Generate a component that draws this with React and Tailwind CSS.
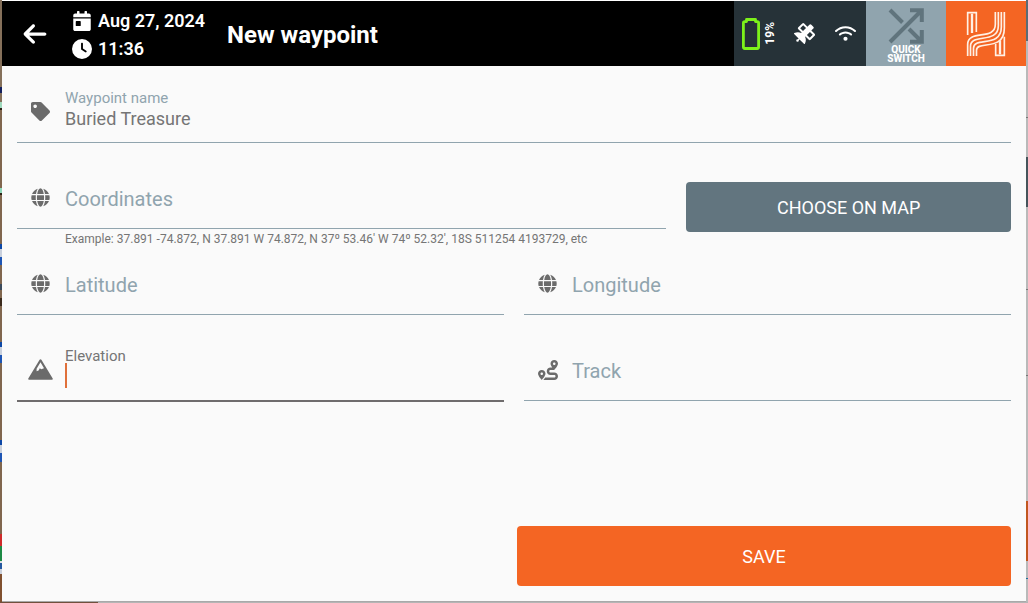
import { FaArrowLeft, FaClock, FaWifi } from "react-icons/fa6";
import { FaCalendarDay, FaGlobe, FaRoute, FaSatellite, FaTag } from "react-icons/fa";

const leftSlices = [
  "h-[87px] bg-[#85705a]",
  "h-[6px] bg-[#14205c]",
  "h-[9px] bg-[#85705a]",
  "h-[6px] bg-[#9fd9bd]",
  "h-[2px] bg-[#2c2015]",
  "h-[78px] bg-[#80664e]",
  "h-[5px] bg-[#8fd8bb]",
  "h-[2px] bg-[#2c2015]",
  "h-[49px] bg-[#80664e]",
  "h-[5px] bg-[#0d47a6]",
  "h-[8px] bg-[#c9d0dc]",
  "h-[8px] bg-[#1d55b4]",
  "h-[19px] bg-[#80664e]",
  "h-[6px] bg-[#3c4a5c]",
  "h-[8px] bg-[#80664e]",
  "h-[8px] bg-[#3a2a1c]",
  "h-[36px] bg-[#80664e]",
  "h-[5px] bg-[#0d47a6]",
  "h-[8px] bg-[#c9d0dc]",
  "h-[8px] bg-[#1d55b4]",
  "h-[77px] bg-[#80664e]",
  "h-[5px] bg-[#0d47a6]",
  "h-[8px] bg-[#c9d0dc]",
  "h-[9px] bg-[#1d55b4]",
  "h-[72px] bg-[#80664e]",
  "h-[12px] bg-[#cf2a2a]",
  "h-[15px] bg-[#1d8a45]",
  "h-[2px] bg-[#e0e0e0]",
  "h-[6px] bg-[#2458a0]",
  "h-[5px] bg-[#c9d0dc]",
  "grow bg-[#80502f]",
];

const rightSlices = [
  "h-[41px] bg-[#5a6b73]",
  "h-[76px] bg-[#b9b9b9]",
  "h-px bg-[#777777]",
  "h-[39px] bg-[#b9b9b9]",
  "h-[50px] bg-[#45545b]",
  "h-[82px] bg-[#b9b9b9]",
  "h-px bg-[#777777]",
  "h-[85px] bg-[#b9b9b9]",
  "h-px bg-[#777777]",
  "h-[125px] bg-[#b9b9b9]",
  "h-[60px] bg-[#c1561f]",
  "h-[17px] bg-[#b9b9b9]",
  "h-px bg-[#1f6f9f]",
  "grow bg-[#b9b9b9]",
];

function Strip({ slices }) {
  return (
    <div className="flex w-0.5 shrink-0 flex-col" aria-hidden="true">
      {slices.map((slice, i) => (
        <div key={i} className={slice} />
      ))}
    </div>
  );
}

function BatteryIcon() {
  return (
    <svg width="18" height="32" viewBox="0 0 18 32" fill="none" stroke="#7df21a" strokeWidth="2.8" strokeLinejoin="round" aria-hidden="true">
      <path d="M4.500 3.600V1.500h9v2.100h1.700q1.400 0 1.400 1.400v24.100q0 1.400-1.400 1.400H2.800q-1.400 0-1.400-1.400V5q0-1.400 1.400-1.400z" />
    </svg>
  );
}

function ShuffleIcon() {
  return (
    <svg width="36" height="36" viewBox="0 0 36 36" fill="none" stroke="#60747d" strokeWidth="4" aria-hidden="true">
      <path d="M2 34 33 3M2 2l12.500 12.500M21 21l12 12M22 2.200h11.800V14M22 33.800h11.800V22" />
    </svg>
  );
}

function BrandLogo() {
  return (
    <svg width="40" height="46" viewBox="0 0 120 138" fill="none" stroke="#fff0e4" strokeWidth="5" aria-hidden="true">
      <path d="M5 72V5h26v58" />
      <path d="M18 66V8" strokeWidth="7" />
      <path d="M115 77v56H89V99" />
      <path d="M102 88v42" strokeWidth="7" />
      <path d="M5 135V100C5 54 88 90 88 40V3" />
      <path d="M13.500 135V106C13.500 65 97 101 97 44V3" />
      <path d="M22.500 135V112C22.500 76 106 112 106 48V3" />
      <path d="M31.500 135V118C31.500 87 115 123 115 52V3" />
    </svg>
  );
}

function PeakIcon() {
  return (
    <svg width="25" height="21" viewBox="0 0 25 21" aria-hidden="true">
      <path
        fill="#6b6b6b"
        fillRule="evenodd"
        d="M12.500 0.300q.6 0 .9.500L24.700 19.400q.5 1.300-.8 1.300H1.100q-1.300 0-.8-1.300L11.600.8q.3-.5.9-.5zM12.500 3.200 8.600 9.700v2.500l2-.8 1.200-2.200 1.500 1 2.700-.9z"
      />
    </svg>
  );
}

function Field({ id, label, icon, value, floating, active }) {
  return (
    <div className={`flex ${active ? "h-[63px] border-b-2 border-[#6f6c6d]" : "h-[62px] border-b border-[#90a4ae]"}`}>
      <label htmlFor={id} className="flex w-12 shrink-0 items-center justify-center pr-px text-[#6b6b6b]">
        {icon}
      </label>
      {floating ? (
        <div className="relative flex min-w-0 grow flex-col pt-2">
          <label htmlFor={id} className={`text-[15px] leading-[18px] ${active ? "text-[#757575]" : "text-[#90a4ae]"}`}>
            {label}
          </label>
          <input
            id={id}
            defaultValue={value}
            className="h-6 w-full bg-transparent text-lg text-[#757575] outline-none"
          />
          {active && <span className="absolute top-6 left-0 h-[25px] w-0.5 bg-[#e0703a]" />}
        </div>
      ) : (
        <input
          id={id}
          aria-label={label}
          placeholder={label}
          className="min-w-0 grow bg-transparent pt-0.5 text-xl text-[#757575] outline-none placeholder:text-[#90a4ae]"
        />
      )}
    </div>
  );
}

export default function App() {
  return (
    <div className="flex min-h-screen flex-col bg-[#b5b5b5] font-[Roboto,sans-serif]">
      <div className="flex grow">
        <Strip slices={leftSlices} />
        <div className="flex min-w-0 grow flex-col border-t border-b border-t-white border-b-[#a9a9a9] bg-[#fafafa]">
          <header className="flex h-[65px] bg-black text-white">
            <button type="button" aria-label="Back" className="flex w-[66px] items-center justify-center">
              <FaArrowLeft size={26} />
            </button>
            <div className="flex flex-col justify-center gap-1 pt-0.5 pl-1 text-lg leading-6 font-semibold">
              <div className="flex items-center gap-1.5">
                <FaCalendarDay size={20} />
                <span>Aug 27, 2024</span>
              </div>
              <div className="flex items-center gap-1.5">
                <FaClock size={20} />
                <span>11:36</span>
              </div>
            </div>
            <h1 className="flex items-center pt-0.5 pl-[22px] text-2xl font-bold">New waypoint</h1>
            <div className="ml-auto flex w-[132px] items-center bg-[#263238] pl-2">
              <BatteryIcon />
              <span className="ml-0.5 rotate-180 text-xs leading-4 font-bold [writing-mode:vertical-rl]">19%</span>
              <FaSatellite size={21} className="ml-4" />
              <FaWifi size={21} className="ml-5" />
            </div>
            <button type="button" className="flex w-20 flex-col items-center bg-[#90a4ae] pt-[7px] text-[10px] leading-[9px] font-extrabold">
              <ShuffleIcon />
              <span className="pt-px">
                QUICK
                <br />
                SWITCH
              </span>
            </button>
            <button type="button" aria-label="Home" className="flex w-20 items-center justify-center bg-[#f46523]">
              <BrandLogo />
            </button>
          </header>
          <form className="flex grow flex-col p-[15px]">
            <Field id="name" label="Waypoint name" value="Buried Treasure" floating icon={<FaTag size={19} />} />
            <div className="mt-6 grid grid-cols-[2fr_1fr] gap-5">
              <div>
                <Field id="coordinates" label="Coordinates" icon={<FaGlobe size={19} />} />
                <p className="h-6 pt-0.5 pl-12 text-xs text-[#757575]">
                  Example: 37.891 -74.872, N 37.891 W 74.872, N 37º 53.46' W 74º 52.32', 18S 511254 4193729, etc
                </p>
              </div>
              <button type="button" className="mt-[15px] h-[50px] rounded bg-[#62757f] pt-0.5 text-lg text-white">
                CHOOSE ON MAP
              </button>
            </div>
            <div className="grid grid-cols-2 gap-x-5 gap-y-6">
              <Field id="latitude" label="Latitude" icon={<FaGlobe size={19} />} />
              <Field id="longitude" label="Longitude" icon={<FaGlobe size={19} />} />
              <Field id="elevation" label="Elevation" floating active icon={<PeakIcon />} />
              <Field id="track" label="Track" icon={<FaRoute size={20} />} />
            </div>
            <div className="mt-auto grid grid-cols-2 gap-1.5 pt-6">
              <button type="submit" className="col-start-2 h-[60px] rounded bg-[#f46523] pt-0.5 text-lg text-white">
                SAVE
              </button>
            </div>
          </form>
        </div>
        <Strip slices={rightSlices} />
      </div>
      <div className="flex h-px" aria-hidden="true">
        <div className="w-[98px] bg-[#70503c]" />
      </div>
    </div>
  );
}
